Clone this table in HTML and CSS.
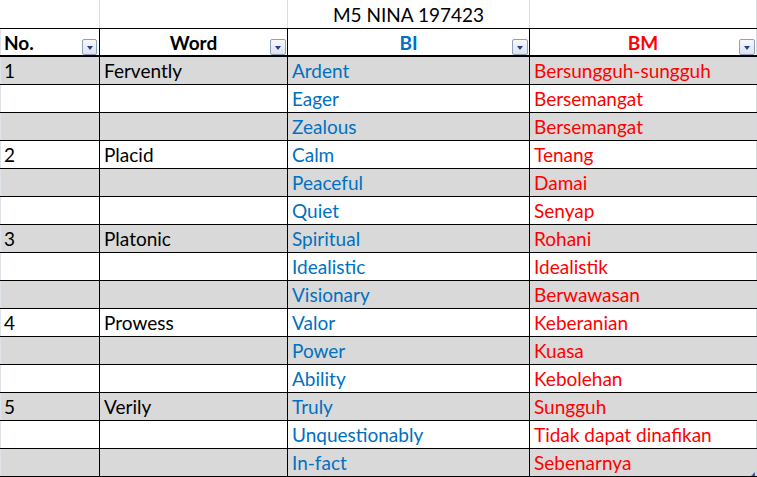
FILE: index.html
```html
<!DOCTYPE html>
<html>
<head>
<meta charset="utf-8">
<link rel="stylesheet" href="styles.css">
</head>
<body>
<div class="sheet">
  <div class="row title-row">
    <div class="cell c1"></div>
    <div class="cell c2"></div>
    <div class="cell c3 center">M5 NINA 197423</div>
    <div class="cell c4"></div>
  </div>
  <div class="row head-row">
    <div class="cell c1 bold">No.<span class="filter"></span></div>
    <div class="cell c2 bold center">Word<span class="filter"></span></div>
    <div class="cell c3 bold center blue">BI<span class="filter"></span></div>
    <div class="cell c4 bold center red">BM<span class="filter"></span></div>
  </div>
  <div class="row band"><div class="cell c1">1</div><div class="cell c2">Fervently</div><div class="cell c3 blue">Ardent</div><div class="cell c4 red">Bersungguh-sungguh</div></div>
  <div class="row"><div class="cell c1"></div><div class="cell c2"></div><div class="cell c3 blue">Eager</div><div class="cell c4 red">Bersemangat</div></div>
  <div class="row band"><div class="cell c1"></div><div class="cell c2"></div><div class="cell c3 blue">Zealous</div><div class="cell c4 red">Bersemangat</div></div>
  <div class="row"><div class="cell c1">2</div><div class="cell c2">Placid</div><div class="cell c3 blue">Calm</div><div class="cell c4 red">Tenang</div></div>
  <div class="row band"><div class="cell c1"></div><div class="cell c2"></div><div class="cell c3 blue">Peaceful</div><div class="cell c4 red">Damai</div></div>
  <div class="row"><div class="cell c1"></div><div class="cell c2"></div><div class="cell c3 blue">Quiet</div><div class="cell c4 red">Senyap</div></div>
  <div class="row band"><div class="cell c1">3</div><div class="cell c2">Platonic</div><div class="cell c3 blue">Spiritual</div><div class="cell c4 red">Rohani</div></div>
  <div class="row"><div class="cell c1"></div><div class="cell c2"></div><div class="cell c3 blue">Idealistic</div><div class="cell c4 red">Idealistik</div></div>
  <div class="row band"><div class="cell c1"></div><div class="cell c2"></div><div class="cell c3 blue">Visionary</div><div class="cell c4 red">Berwawasan</div></div>
  <div class="row"><div class="cell c1">4</div><div class="cell c2">Prowess</div><div class="cell c3 blue">Valor</div><div class="cell c4 red">Keberanian</div></div>
  <div class="row band"><div class="cell c1"></div><div class="cell c2"></div><div class="cell c3 blue">Power</div><div class="cell c4 red">Kuasa</div></div>
  <div class="row"><div class="cell c1"></div><div class="cell c2"></div><div class="cell c3 blue">Ability</div><div class="cell c4 red">Kebolehan</div></div>
  <div class="row band"><div class="cell c1">5</div><div class="cell c2">Verily</div><div class="cell c3 blue">Truly</div><div class="cell c4 red">Sungguh</div></div>
  <div class="row"><div class="cell c1"></div><div class="cell c2"></div><div class="cell c3 blue">Unquestionably</div><div class="cell c4 red">Tidak dapat dinafikan</div></div>
  <div class="row band"><div class="cell c1"></div><div class="cell c2"></div><div class="cell c3 blue">In-fact</div><div class="cell c4 red last">Sebenarnya<span class="handle"></span></div></div>
</div>
</body>
</html>
```

FILE: styles.css
```css
* { box-sizing: border-box; }
html, body { margin: 0; padding: 0; background: #fff; }
body {
  font-family: "Lato", "Liberation Sans", sans-serif;
  font-size: 19px;
  color: #000;
  overflow: hidden;
}
.sheet { width: 757px; }
.row {
  display: grid;
  grid-template-columns: 100px 188px 242px 227px;
  height: 28px;
  border-bottom: 1px solid #000;
  background: #fff;
}
.row.band { background: #d9d9d9; }
.title-row { height: 29px; }
.head-row { height: 28px; border-bottom: 2px solid #000; }
.cell {
  position: relative;
  display: flex;
  align-items: center;
  padding-left: 4px;
  border-right: 1px solid #000;
  white-space: nowrap;
  line-height: 1;
}
.cell.c1 { border-left: 1px solid #dfe3ea; padding-left: 3px; }
.cell.c4 { border-right-color: #d4d7dc; }
.title-row .cell { border-right-color: #dadcdf; }
.title-row .cell.c1 { border-left-color: #fff; }
.center { justify-content: center; padding-left: 0; }
.bold { font-weight: 700; }
.blue { color: #0070c0; }
.red { color: #ff0000; }
.filter {
  position: absolute;
  right: 1px;
  bottom: 0;
  width: 16px;
  height: 16px;
  border: 1px solid #8e9fbd;
  border-radius: 2px;
  background: linear-gradient(#f7f8fb, #dde3ee);
}
.filter::after {
  content: "";
  position: absolute;
  left: 4px;
  top: 6px;
  border-left: 3px solid transparent;
  border-right: 3px solid transparent;
  border-top: 4px solid #24418f;
}
.head-row .c1 .filter { right: 2px; width: 15px; }
.handle {
  position: absolute;
  right: 1px;
  bottom: 0;
  width: 0;
  height: 0;
  border-left: 4px solid transparent;
  border-bottom: 4px solid #3c5aa6;
}
```
